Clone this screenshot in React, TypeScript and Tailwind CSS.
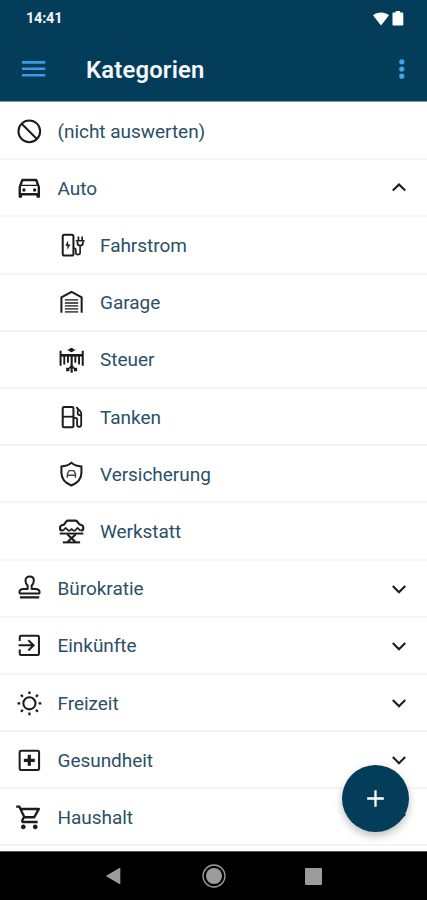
import React from 'react';

interface IconProps {
  children: React.ReactNode;
}

const Icon: React.FC<IconProps> = ({ children }) => (
  <svg
    viewBox="0 0 24 24"
    className="w-[28.6px] h-[28.6px] shrink-0"
    fill="none"
    stroke="#1c1c1c"
    strokeWidth="1.7"
  >
    {children}
  </svg>
);

const icons: Record<string, React.ReactNode> = {
  block: (
    <>
      <circle cx="12" cy="12" r="9.1" />
      <path d="M5.6 5.6l12.8 12.8" />
    </>
  ),
  car: (
    <path
      fill="#1c1c1c"
      stroke="none"
      d="M18.92 5.01C18.72 4.42 18.16 4 17.5 4h-11c-.66 0-1.21.42-1.42 1.01L3 11v8c0 .55.45 1 1 1h1c.55 0 1-.45 1-1v-1h12v1c0 .55.45 1 1 1h1c.55 0 1-.45 1-1v-8l-2.08-5.99zM6.85 6h10.29l1.08 3.11H5.77L6.85 6zM19 16H5v-5.34L5.23 10h13.53l.24.66V16zM7.5 12a1.4 1.4 0 1 0 0 2.8 1.4 1.4 0 0 0 0-2.8zm9 0a1.4 1.4 0 1 0 0 2.8 1.4 1.4 0 0 0 0-2.8z"
    />
  ),
  charger: (
    <>
      <rect x="4.8" y="3.2" width="9" height="17.4" rx="1.4" />
      <path d="M9.3 8l-2.4 4.3h1.8v3.4l2.6-4.4H9.4z" fill="#1c1c1c" stroke="none" />
      <path d="M13.8 14.6h.8c.8 0 1.2.5 1.2 1.2v2.4c0 2.2 3.6 2.2 3.6 0v-5.4" strokeWidth="1.4" />
      <path d="M18 4.6v3.6M21.1 4.6v3.6M15.8 8.2h7.4" strokeWidth="1.4" />
      <path d="M17.2 8.8v1.3c0 3 4.6 3 4.6 0V8.8" strokeWidth="1.5" />
    </>
  ),
  garage: (
    <>
      <path d="M3.7 20.8V7.9L12.2 3.2l8.5 4.7v12.9" strokeWidth="1.7" />
      <path d="M6.6 10h11.2M6.6 12.6h11.2M6.6 15h11.2M6.6 17.5h11.2M6.6 20h11.2" stroke="#555" strokeWidth="1.5" />
    </>
  ),
  eagle: (
    <>
      <path d="M8.2 3.4l2.1-.6c.8-1.5 2.8-1.5 3.6 0l2 .6-2.1.8c-.7 1.3-2.8 1.3-3.4 0z" fill="#1c1c1c" stroke="none" />
      <path d="M3 4v12.6M21.6 4v12.6" strokeWidth="1.7" />
      <path d="M3 7.8h18.6" strokeWidth="2.2" />
      <path d="M6.1 8v7.6M9.2 8v6M15.4 8v6M18.5 8v7.6" strokeWidth="1.6" />
      <path d="M12.3 7v15.4" strokeWidth="1.8" />
      <path d="M8.4 20.4l3.9-3.7 3.9 3.7M8.4 18.2v2.2h2M16.2 18.2v2.2h-2" strokeWidth="1.4" />
    </>
  ),
  fuel: (
    <>
      <rect x="4.8" y="3.4" width="9" height="17" rx="1.1" strokeWidth="1.7" />
      <path d="M4.8 11.5h9" strokeWidth="1.5" />
      <path d="M16.2 3.5l3.4 3.6c.5.6.7 1 .7 1.8v9.4c0 2.3-3.4 2.3-3.4 0v-4.4c0-.9-.5-1.4-1.4-1.4h-1.7" strokeWidth="1.5" />
      <path d="M17.4 5.4v3.1c0 1 .9 1.7 2.8 1.8" strokeWidth="1.5" />
    </>
  ),
  shield: (
    <>
      <path d="M12.1 2.4c2 1.8 4.8 2.9 8.4 3v5.2c0 4.8-3.4 8.7-8.4 10.8-5-2.1-8.4-6-8.4-10.8V5.4c3.6-.1 6.4-1.2 8.4-3z" />
      <path d="M8.7 14.8v-3.2l1.4-2.7h4l1.4 2.7v3.2M8.7 12.8h6.8" stroke="#444" strokeWidth="1.2" />
    </>
  ),
  lift: (
    <>
      <path d="M4.9 11.2H3.4c-.5 0-.8-.4-.8-.9V8.7c0-1 .5-1.5 1.4-1.8L6 6.3l1.6-2.4c.5-.6 1-.9 1.8-.9h5.9c.7 0 1.2.3 1.6.8l2 2.4 1.6.6c1 .4 1.5.9 1.5 1.8v1.7c0 .5-.3.9-.9.9h-1.3" strokeWidth="1.8" />
      <path d="M5 11.4l2.3-2.2 2.3 2.2h1.1l1.6-1.2 1.6 1.2h1.1l2.3-2.2 2.3 2.2" strokeWidth="1.4" />
      <path d="M2.3 13.9h19.8" strokeWidth="1.6" />
      <path d="M8.6 14.4l7 6.6M15.8 14.4l-7 6.6" strokeWidth="1.8" />
      <path d="M4.9 21.3h14.5" strokeWidth="1.7" />
    </>
  ),
  stamp: (
    <>
      <path d="M10.6 13.2V9.7C8.9 8.4 8.8 7 8.8 5.4c0-1.9 1.4-3.3 3.5-3.3s3.5 1.4 3.5 3.3c0 1.6-.1 3-1.8 4.3v3.5" strokeWidth="1.7" />
      <path d="M10.6 12.6H7.2c-2.2 0-3.4 1.2-3.4 2.4v.8c0 .4.2.6.6.6H20c.4 0 .6-.2.6-.6V15c0-1.2-1.2-2.4-3.4-2.4H14" strokeWidth="1.7" />
      <path d="M4.1 19.6h16.2" strokeWidth="1.9" />
    </>
  ),
  enter: (
    <>
      <path d="M4 8.4V5c0-.7.4-1.1 1.1-1.1H19c.7 0 1.1.4 1.1 1.1v14c0 .7-.4 1.1-1.1 1.1H5.1c-.7 0-1.1-.4-1.1-1.1v-3.4" />
      <path d="M3 12h12.5M11.2 7.7l4.4 4.3-4.4 4.3" />
    </>
  ),
  sun: (
    <>
      <circle cx="12.1" cy="12" r="5.1" strokeWidth="1.7" />
      <path
        d="M12.1 2v2.3M12.1 19.7V22M2.1 12h2.3M19.8 12h2.3M5 4.9l1.6 1.6M17.6 17.5l1.6 1.6M5 19.1l1.6-1.6M17.6 6.5l1.6-1.6"
        strokeWidth="1.9"
      />
    </>
  ),
  health: (
    <>
      <rect x="3.9" y="3.9" width="16.3" height="16.3" rx="1.2" />
      <path d="M12 7.4v9.2M7.4 12h9.2" strokeWidth="2.7" />
    </>
  ),
  cart: (
    <path
      fill="#1c1c1c"
      stroke="none"
      d="M15.55 13c.75 0 1.41-.41 1.75-1.03l3.58-6.49A.996.996 0 0 0 20.01 4H5.21l-.94-2H1v2h2l3.6 7.59-1.35 2.44C4.52 15.37 5.48 17 7 17h12v-2H7l1.1-2h7.45zM6.16 6h12.15l-2.76 5H8.53L6.16 6zM7 18c-1.1 0-1.99.9-1.99 2S5.9 22 7 22s2-.9 2-2-.9-2-2-2zm10 0c-1.1 0-1.99.9-1.99 2s.89 2 1.99 2 2-.9 2-2-.9-2-2-2z"
    />
  ),
};

interface Category {
  name: string;
  icon: string;
  child?: boolean;
  arrow?: 'up' | 'down';
}

const categories: Category[] = [
  { name: '(nicht auswerten)', icon: 'block' },
  { name: 'Auto', icon: 'car', arrow: 'up' },
  { name: 'Fahrstrom', icon: 'charger', child: true },
  { name: 'Garage', icon: 'garage', child: true },
  { name: 'Steuer', icon: 'eagle', child: true },
  { name: 'Tanken', icon: 'fuel', child: true },
  { name: 'Versicherung', icon: 'shield', child: true },
  { name: 'Werkstatt', icon: 'lift', child: true },
  { name: 'Bürokratie', icon: 'stamp', arrow: 'down' },
  { name: 'Einkünfte', icon: 'enter', arrow: 'down' },
  { name: 'Freizeit', icon: 'sun', arrow: 'down' },
  { name: 'Gesundheit', icon: 'health', arrow: 'down' },
  { name: 'Haushalt', icon: 'cart', arrow: 'down' },
];

const CategoryRow: React.FC<{ category: Category }> = ({ category }) => (
  <li
    className={`flex items-center h-[57.2px] pt-px pr-[20px] border-b-2 border-[#f5f5f5] ${
      category.child ? 'pl-[57.2px]' : 'pl-[14.7px]'
    }`}
  >
    <Icon>{icons[category.icon]}</Icon>
    <span className="ml-[14.2px] pt-[1.6px] flex-1 text-[19px] tracking-[-0.03px] text-[#2a5067]">{category.name}</span>
    {category.arrow && (
      <svg viewBox="0 0 16 16" className="w-4 h-4" fill="none" stroke="#1c1c1c" strokeWidth="2.1">
        <path d={category.arrow === 'up' ? 'M1.8 10.6L8 4.4l6.2 6.2' : 'M1.8 5L8 11.2 14.2 5'} />
      </svg>
    )}
  </li>
);

const StatusBar: React.FC = () => (
  <div className="flex items-center justify-between h-[37px] pl-[26px] pr-[23px]">
    <span className="pt-px text-[14.5px] font-bold tracking-[-0.2px] text-[#f4f7f9]">14:41</span>
    <div className="flex items-center gap-[3px]">
      <svg viewBox="0 0 16 14" className="w-4 h-3.5" fill="#fff">
        <path d="M0 3.2C4.4-.3 11.6-.3 16 3.2L8 13.6z" />
      </svg>
      <svg viewBox="0 0 12 15" className="w-3 h-[15px]" fill="#fff">
        <path d="M3.7 0h4.4v1.6h2.1c.7 0 1.1.4 1.1 1.1v10.8c0 .7-.4 1.1-1.1 1.1H1.6c-.7 0-1.1-.4-1.1-1.1V2.7c0-.7.4-1.1 1.1-1.1h2.1z" />
      </svg>
    </div>
  </div>
);

const AppBar: React.FC = () => (
  <div className="flex items-center h-[63px] pl-[22px] pr-[22px]">
    <svg viewBox="0 0 24 16" className="w-6 h-4" stroke="#3b9be3" strokeWidth="2.6">
      <path d="M0 1.4h23.2M0 7.8h23.2M0 14.2h23.2" />
    </svg>
    <h1 className="ml-10 pt-[4px] flex-1 text-[23.8px] leading-none font-semibold tracking-[0.2px] text-[#f5f8fa]">
      Kategorien
    </h1>
    <svg viewBox="0 0 6 22" className="w-1.5 h-[22px]" fill="#3fa4ea">
      <circle cx="2.8" cy="3.8" r="2.6" />
      <circle cx="2.8" cy="11" r="2.6" />
      <circle cx="2.8" cy="18.2" r="2.6" />
    </svg>
  </div>
);

const NavigationBar: React.FC = () => (
  <nav className="h-[49px] bg-black border-t border-[#555] flex items-center justify-between pl-[105px] pr-[105px]">
    <svg viewBox="0 0 16 18" className="w-4 h-[18px]" fill="#9c9c9c">
      <path d="M.7 9L15.3.6v16.8z" />
    </svg>
    <svg viewBox="0 0 24 24" className="w-6 h-6 ml-0.5" fill="#9c9c9c">
      <circle cx="12" cy="12" r="11" fill="none" stroke="#9c9c9c" strokeWidth="1.3" />
      <circle cx="12" cy="12" r="8" />
    </svg>
    <div className="w-[17px] h-[17px] rounded-[1px] bg-[#9c9c9c]" />
  </nav>
);

export default function App() {
  return (
    <div className="relative flex flex-col w-[427px] h-[900px] overflow-hidden bg-white font-[Roboto,sans-serif]">
      <header className="h-[102px] shrink-0 bg-[#033d5a] border-b border-[#7897a7]">
        <StatusBar />
        <AppBar />
      </header>
      <ul className="flex-1 pt-px">
        {categories.map((category) => (
          <CategoryRow key={category.name} category={category} />
        ))}
      </ul>
      <button className="absolute left-[342px] top-[765px] w-[67px] h-[67px] rounded-full bg-[#033d5a] flex items-center justify-center shadow-[0_4px_8px_rgba(0,0,0,0.25)]">
        <svg viewBox="0 0 18 18" className="w-[17px] h-[17px]" stroke="#fff" strokeWidth="2.4">
          <path d="M9 .2v17.6M.2 9h17.6" />
        </svg>
      </button>
      <NavigationBar />
    </div>
  );
}
